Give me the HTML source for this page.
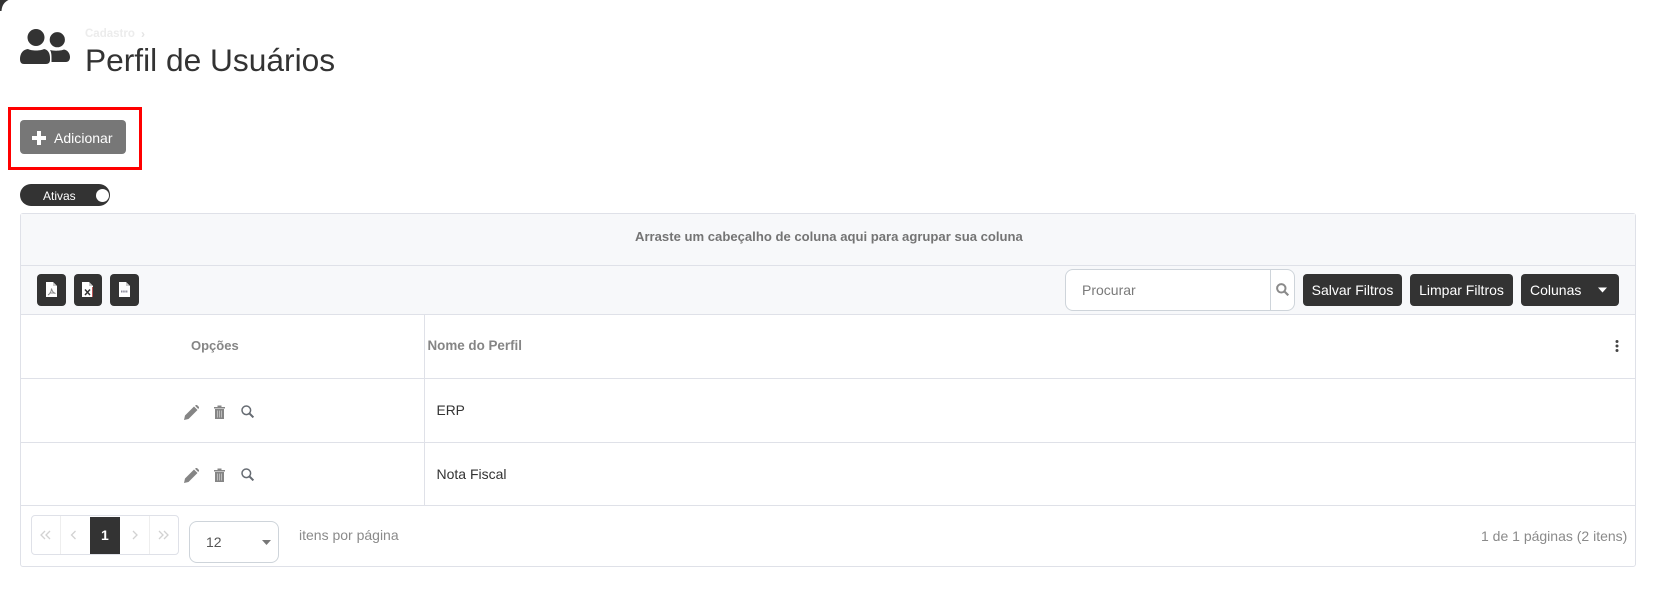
<!DOCTYPE html>
<html lang="pt-BR">
<head>
<meta charset="utf-8">
<title>Perfil de Usuários</title>
<style>
html,body{margin:0;padding:0;background:#fff}
body{width:1655px;height:591px;position:relative;overflow:hidden;font-family:"Liberation Sans",sans-serif;color:#333}
.a{position:absolute;box-sizing:border-box}
.t{position:absolute;white-space:nowrap;line-height:20px}
.btn{position:absolute;box-sizing:border-box;background:#333;color:#fff;border-radius:4px;top:274px;height:32px;font-size:14px;line-height:32px;text-align:center;white-space:nowrap}
.line{position:absolute;background:#dfe1e8}
svg{position:absolute;display:block}
</style>
</head>
<body>
<svg style="left:0;top:0" width="12" height="12" viewBox="0 0 12 12"><path d="M0 0H8.500C4.500 2 2 5 1.500 11H0Z" fill="#333"/></svg>

<svg style="left:20px;top:29px" width="50" height="36" viewBox="0 0 50 36" fill="#333">
<circle cx="16" cy="8.500" r="8.500"/>
<path d="M0 30C0 24.500 3 20.500 8 20C11 22 21 22 24 20C28 20.500 30 24.500 30 29V31C30 33.500 28.500 35 26 35H4C1.500 35 0 33.500 0 30Z"/>
<circle cx="37.300" cy="10.700" r="7.600"/>
<path d="M30 21C33 22 41 22 44 20.500C47.500 21 50 24.500 50 28C50 31 48.500 33 46 33H31.500V28C31.500 25 31 22.500 30 21Z"/>
</svg>
<div class="t" style="left:85px;top:24px;font-size:11.500px;color:#ececec;font-weight:bold;line-height:20px">Cadastro</div>
<div class="t" style="left:141px;top:24px;font-size:12px;color:#e4e4e4;font-weight:bold">›</div>
<div class="t" style="left:85px;top:42px;font-size:31.700px;line-height:36px;color:#333">Perfil de Usuários</div>

<div class="a" style="left:8px;top:107px;width:134px;height:63px;border:3px solid #f00"></div>
<div class="a" style="left:20px;top:120px;width:106px;height:34px;background:#777;border-radius:4px"></div>
<svg style="left:32px;top:131px" width="14" height="14" viewBox="0 0 14 14"><path d="M5 0H9V5H14V9H9V14H5V9H0V5H5Z" fill="#fff"/></svg>
<div class="t" style="left:54px;top:128px;font-size:14px;color:#fff;letter-spacing:.02px">Adicionar</div>

<div class="a" style="left:20px;top:184px;width:90px;height:22px;background:#333;border-radius:11px"></div>
<div class="a" style="left:96px;top:189px;width:13px;height:13px;background:#fff;border-radius:50%"></div>
<div class="t" style="left:43px;top:186px;font-size:12px;color:#fff">Ativas</div>

<div class="a" style="left:20px;top:213px;width:1616px;height:354px;border:1px solid #dfe1e8;border-radius:3px;background:#fff"></div>
<div class="a" style="left:21px;top:214px;width:1614px;height:100px;background:#f7f8fa"></div>
<div class="line" style="left:21px;top:265px;width:1614px;height:1px"></div>
<div class="line" style="left:21px;top:314px;width:1614px;height:1px"></div>
<div class="line" style="left:21px;top:378px;width:1614px;height:1px"></div>
<div class="line" style="left:21px;top:442px;width:1614px;height:1px"></div>
<div class="line" style="left:21px;top:505px;width:1614px;height:1px"></div>
<div class="line" style="left:424px;top:315px;width:1px;height:190px"></div>

<div class="t" style="left:635px;top:227px;font-size:13.100px;font-weight:bold;color:#747474">Arraste um cabeçalho de coluna aqui para agrupar sua coluna</div>

<div class="btn" style="left:37px;width:29px"></div>
<div class="btn" style="left:74px;width:28px"></div>
<div class="btn" style="left:110px;width:29px"></div>
<svg style="left:46px;top:282px" width="11" height="15" viewBox="0 0 11 15"><path d="M0 0H7L11 4V15H0Z" fill="#fff"/><path d="M7 0V4H11" fill="#ccc"/><path d="M2 13C4 12 5.500 9 5.500 6.500C6 9 7.500 11 9.500 11.500M3.500 11H9" fill="none" stroke="#8a8a8a" stroke-width="1"/></svg>
<svg style="left:82px;top:282px" width="11" height="15" viewBox="0 0 11 15"><path d="M0 0H7L11 4V15H0Z" fill="#fff"/><path d="M7 0V4H11" fill="#ccc"/><path d="M3 7.500L8 13M8 7.500L3 13" stroke="#333" stroke-width="1.500"/><path d="M10.500 5V15" stroke="#b55" stroke-width="1"/></svg>
<svg style="left:119px;top:282px" width="11" height="15" viewBox="0 0 11 15"><path d="M0 0H7L11 4V15H0Z" fill="#fff"/><path d="M7 0V4H11" fill="#ccc"/><path d="M2 9.500H9" stroke="#889" stroke-width="2" stroke-dasharray="1.500 .7"/></svg>

<div class="a" style="left:1065px;top:269px;width:230px;height:42px;background:#fff;border:1px solid #ced4da;border-radius:8px"></div>
<div class="line" style="left:1270px;top:270px;width:1px;height:40px;background:#ced4da"></div>
<div class="t" style="left:1082px;top:280px;font-size:14px;color:#7a7a7a">Procurar</div>
<svg style="left:1276px;top:283px" width="13" height="13" viewBox="0 0 13 13" fill="none" stroke="#8a8a8a" stroke-width="2"><circle cx="5.300" cy="5.300" r="4.200"/><path d="M8.500 8.500L12.300 12.300" stroke-width="2.200"/></svg>
<div class="btn" style="left:1303px;width:99px">Salvar Filtros</div>
<div class="btn" style="left:1410px;width:103px">Limpar Filtros</div>
<div class="btn" style="left:1521px;width:98px;text-align:left;padding-left:9px">Colunas</div>
<svg style="left:1598px;top:287px" width="10" height="6" viewBox="0 0 10 6"><path d="M0 0.500H9L4.500 5.500Z" fill="#fff"/></svg>

<div class="t" style="left:191px;top:336px;font-size:13px;font-weight:bold;color:#858585">Opções</div>
<div class="t" style="left:427.500px;top:336px;font-size:13.400px;font-weight:bold;color:#858585">Nome do Perfil</div>
<svg style="left:1614px;top:339px" width="6" height="14" viewBox="0 0 6 14" fill="#444"><circle cx="3" cy="2.500" r="1.500"/><circle cx="3" cy="7" r="1.500"/><circle cx="3" cy="11.500" r="1.500"/></svg>

<svg style="left:184px;top:405px" width="15" height="15" viewBox="0 0 15 15" fill="#858585"><path d="M0 15L1 10.500L10 1.500L13.500 5L4.500 14Z"/><path d="M11 .8L12 0H13L15 2V3L14.200 4Z"/></svg>
<svg style="left:214px;top:405px" width="11" height="14" viewBox="0 0 11 14"><path d="M0 2H3.500V.5H7.500V2H11V3.500H0Z" fill="#858585"/><path d="M1 4H10V14H1Z" fill="#858585"/><path d="M3.500 5.500V12.500M5.500 5.500V12.500M7.500 5.500V12.500" stroke="#fff" stroke-width=".8" opacity=".55"/></svg>
<svg style="left:241px;top:405px" width="13" height="13" viewBox="0 0 13 13" fill="none" stroke="#666b72" stroke-width="1.500"><circle cx="5.300" cy="5.300" r="4.300"/><path d="M8.500 8.500L12.400 12.400" stroke-width="2"/></svg>
<div class="t" style="left:436.500px;top:401px;font-size:13.800px;color:#333">ERP</div>

<svg style="left:184px;top:468px" width="15" height="15" viewBox="0 0 15 15" fill="#858585"><path d="M0 15L1 10.500L10 1.500L13.500 5L4.500 14Z"/><path d="M11 .8L12 0H13L15 2V3L14.200 4Z"/></svg>
<svg style="left:214px;top:468px" width="11" height="14" viewBox="0 0 11 14"><path d="M0 2H3.500V.5H7.500V2H11V3.500H0Z" fill="#858585"/><path d="M1 4H10V14H1Z" fill="#858585"/><path d="M3.500 5.500V12.500M5.500 5.500V12.500M7.500 5.500V12.500" stroke="#fff" stroke-width=".8" opacity=".55"/></svg>
<svg style="left:241px;top:468px" width="13" height="13" viewBox="0 0 13 13" fill="none" stroke="#666b72" stroke-width="1.500"><circle cx="5.300" cy="5.300" r="4.300"/><path d="M8.500 8.500L12.400 12.400" stroke-width="2"/></svg>
<div class="t" style="left:436.500px;top:464px;font-size:14px;color:#333">Nota Fiscal</div>

<div class="a" style="left:31px;top:515px;width:148px;height:40px;border:1px solid #dfe1e8;border-radius:4px"></div>
<div class="line" style="left:60px;top:516px;width:1px;height:38px;background:#eee"></div>
<div class="line" style="left:149px;top:516px;width:1px;height:38px;background:#eee"></div>
<div class="a" style="left:90px;top:517px;width:30px;height:37px;background:#333"></div>
<div class="t" style="left:101px;top:525px;font-size:14px;font-weight:bold;color:#fff">1</div>
<svg style="left:40px;top:530px" width="140" height="10" viewBox="0 0 140 10" fill="none" stroke="#d2d2d2" stroke-width="1.300"><path d="M5 1L1 5L5 9M10 1L6 5L10 9"/><path d="M35.500 1L31.500 5L35.500 9"/><path d="M93 1L97 5L93 9"/><path d="M119 1L123 5L119 9M124 1L128 5L124 9"/></svg>

<div class="a" style="left:189px;top:521px;width:90px;height:42px;border:1px solid #ced4da;border-radius:8px"></div>
<div class="t" style="left:206px;top:532px;font-size:14px;color:#555">12</div>
<svg style="left:262px;top:540px" width="9" height="5" viewBox="0 0 9 5"><path d="M0 0H9L4.500 5Z" fill="#777"/></svg>
<div class="t" style="left:299px;top:525px;font-size:14px;color:#8a8a8a">itens por página</div>
<div class="t" style="left:1481px;top:526px;font-size:14px;color:#8a8a8a">1 de 1 páginas (2 itens)</div>
</body>
</html>
